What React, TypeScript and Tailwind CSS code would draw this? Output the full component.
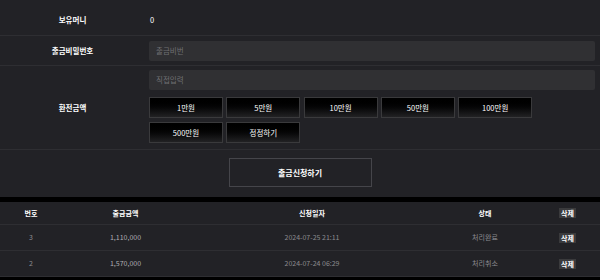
import React from "react";

const font = { fontFamily: '"Noto Sans CJK KR", "Noto Sans", sans-serif' };

const amounts = ["1만원", "5만원", "10만원", "50만원", "100만원", "500만원", "정정하기"];

const rows = [
  { no: "3", amount: "1,110,000", date: "2024-07-25 21:11", status: "처리완료" },
  { no: "2", amount: "1,570,000", date: "2024-07-24 06:29", status: "처리취소" },
];

function AmountButton({ label }: { label: string }) {
  return (
    <button className="flex h-[21px] w-[74px] items-center justify-center border border-[#3a3a3c] bg-gradient-to-b from-[#000000] to-[#222224] text-[7.5px] text-white">
      {label}
    </button>
  );
}

export default function App() {
  return (
    <div className="h-[280px] w-[600px] overflow-hidden bg-black" style={font}>
      {/* Form */}
      <div className="bg-[#222226]">
        <div className="flex h-[36px] border-b border-[#2e2e32] pt-[4px]">
          <div className="flex w-[145px] items-center justify-center text-[7.5px] font-bold text-white">보유머니</div>
          <div className="flex flex-1 items-center pl-[5px] text-[7.5px] text-white">0</div>
        </div>
        <div className="flex h-[30px] border-b border-[#2e2e32]">
          <div className="flex w-[145px] items-center justify-center text-[7.5px] font-bold text-white">출금비밀번호</div>
          <div className="flex flex-1 items-start pl-[4px] pr-[5px] pt-[5px]">
            <div className="flex h-[20px] w-full items-center rounded-[2px] bg-[#303033] pl-[7px] text-[7.5px] text-[#6f6f72]">
              출금비번
            </div>
          </div>
        </div>
        <div className="flex h-[84px] border-b border-[#2e2e32]">
          <div className="flex w-[145px] items-center justify-center text-[7.5px] font-bold text-white">환전금액</div>
          <div className="flex flex-1 flex-col pl-[4px] pr-[5px] pt-[4px]">
            <div className="flex h-[20px] w-full items-center rounded-[2px] bg-[#303033] pl-[7px] text-[7.5px] text-[#6f6f72]">
              직접입력
            </div>
            <div className="mt-[7px] flex w-[390px] flex-wrap gap-x-[3.3px] gap-y-[4px]">
              {amounts.map((a) => (
                <AmountButton key={a} label={a} />
              ))}
            </div>
          </div>
        </div>
        <div className="flex h-[47px] items-start justify-center pt-[8px]">
          <button className="flex h-[29px] w-[143px] items-center justify-center border border-[#45454a] bg-[#222226] text-[8px] font-bold text-white">
            출금신청하기
          </button>
        </div>
      </div>

      {/* Table */}
      <div className="mt-[5px] bg-[#222226]">
        <div className="flex h-[23px] items-center border-b border-[#2e2e32] text-[7px] font-bold text-white">
          <div className="w-[62px] text-center">번호</div>
          <div className="w-[127px] text-center">출금금액</div>
          <div className="w-[246px] text-center">신청일자</div>
          <div className="w-[100px] text-center">상태</div>
          <div className="flex w-[65px] justify-center">
            <span className="bg-[#3a3a3c] px-[2px] leading-[10px]">삭제</span>
          </div>
        </div>
        {rows.map((r) => (
          <div key={r.no} className="flex h-[26px] items-center border-b border-[#2e2e32] text-[7px] text-[#8c8c90]">
            <div className="w-[62px] text-center">{r.no}</div>
            <div className="w-[127px] text-center text-[#b0b0b4]">{r.amount}</div>
            <div className="w-[246px] text-center">{r.date}</div>
            <div className="w-[100px] text-center">{r.status}</div>
            <div className="flex w-[65px] justify-center">
              <span className="bg-[#3a3a3c] px-[2px] font-bold leading-[10px] text-white">삭제</span>
            </div>
          </div>
        ))}
      </div>
    </div>
  );
}
